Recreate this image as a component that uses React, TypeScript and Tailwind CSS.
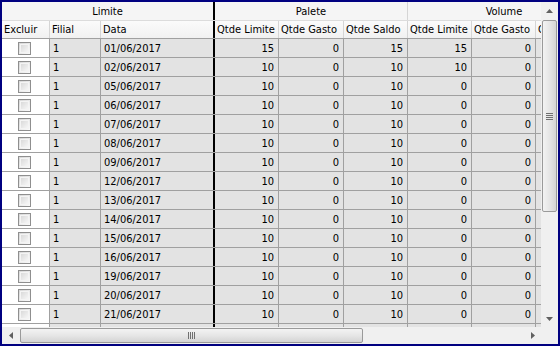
import React from "react";

const dates = [
  "01/06/2017","02/06/2017","05/06/2017","06/06/2017","07/06/2017","08/06/2017","09/06/2017",
  "12/06/2017","13/06/2017","14/06/2017","15/06/2017","16/06/2017","19/06/2017","20/06/2017","21/06/2017","22/06/2017",
];

type Row = { date: string; pl: number; pg: number; ps: number; vl: number; vg: number };
const rows: Row[] = dates.map((d, i) => ({
  date: d,
  pl: i === 0 ? 15 : 10,
  pg: 0,
  ps: i === 0 ? 15 : 10,
  vl: i === 0 ? 15 : i === 1 ? 10 : 0,
  vg: 0,
}));

const font = { fontFamily: '"DejaVu Sans Condensed", "Liberation Sans", sans-serif' };

function Checkbox() {
  return (
    <div className="w-[13px] h-[13px] border border-[#8f8f8f] bg-gradient-to-br from-[#d6d6d6] to-[#fbfbfb] p-px">
      <div className="w-full h-full border border-[#f4f4f4] bg-gradient-to-br from-[#dadada] to-[#f6f6f6]" />
    </div>
  );
}

function HeadCell({ w, label, thick }: { w: string; label: string; thick?: boolean }) {
  return (
    <div
      className={`${w} shrink-0 h-full flex items-center pl-[2px] whitespace-nowrap overflow-hidden ${
        thick ? "border-r-2 border-black" : "border-r border-[#d5d5d5]"
      }`}
    >
      {label}
    </div>
  );
}

function NumCell({ w, v }: { w: string; v: number }) {
  return (
    <div className={`${w} shrink-0 h-full flex items-center justify-end pr-[4px] border-r border-[#a0a0a0] bg-[#e3e3e3]`}>
      {v}
    </div>
  );
}

export default function App() {
  return (
    <div className="w-[560px] h-[346px] border-2 border-[#000080] bg-[#f0f0f0] flex flex-col text-[11px] text-black leading-none" style={font}>
      <div className="flex h-[325px]">
        {/* grid */}
        <div className="w-[539px] h-full overflow-hidden flex flex-col">
          {/* group header */}
          <div className="flex h-[19px] shrink-0 border-b border-[#dcdcdc] bg-[#f5f5f5]">
            <div className="w-[213px] shrink-0 h-full border-r-2 border-black flex items-center justify-center">Limite</div>
            <div className="w-[193px] shrink-0 h-full border-r border-[#d5d5d5] flex items-center justify-center">Palete</div>
            <div className="w-[192px] shrink-0 h-full flex items-center justify-center">Volume</div>
          </div>
          {/* column header */}
          <div className="flex h-[18px] shrink-0 border-b border-[#a0a0a0] bg-gradient-to-b from-[#fbfbfb] to-[#f1f1f1]">
            <HeadCell w="w-[48px]" label="Excluir" />
            <HeadCell w="w-[51px]" label="Filial" />
            <HeadCell w="w-[114px]" label="Data" thick />
            <HeadCell w="w-[64px]" label="Qtde Limite" />
            <HeadCell w="w-[65px]" label="Qtde Gasto" />
            <HeadCell w="w-[64px]" label="Qtde Saldo" />
            <HeadCell w="w-[64px]" label="Qtde Limite" />
            <HeadCell w="w-[64px]" label="Qtde Gasto" />
            <HeadCell w="w-[64px]" label="Qtde Saldo" />
          </div>
          {/* rows */}
          <div className="flex flex-col">
            {rows.map((r, i) => (
              <div key={i} className="flex h-[19px] shrink-0 border-b border-[#a0a0a0]">
                <div className="w-[48px] shrink-0 h-full bg-white border-r border-[#a0a0a0] flex items-center pl-[16px]">
                  <Checkbox />
                </div>
                <div className="w-[51px] shrink-0 h-full bg-[#e3e3e3] border-r border-[#a0a0a0] flex items-center pl-[3px]">1</div>
                <div className="w-[114px] shrink-0 h-full bg-[#e3e3e3] border-r-2 border-black flex items-center pl-[3px]">{r.date}</div>
                <NumCell w="w-[64px]" v={r.pl} />
                <NumCell w="w-[65px]" v={r.pg} />
                <NumCell w="w-[64px]" v={r.ps} />
                <NumCell w="w-[64px]" v={r.vl} />
                <NumCell w="w-[64px]" v={r.vg} />
                <NumCell w="w-[64px]" v={r.ps} />
              </div>
            ))}
          </div>
        </div>
        {/* vertical scrollbar */}
        <div className="w-[17px] h-full bg-[#f0f0f0] flex flex-col items-center">
          <div className="h-[17px] w-full flex items-center justify-center shrink-0">
            <svg width="7" height="4" viewBox="0 0 7 4"><path d="M0 4 L3.5 0 L7 4 Z" fill="#606060" /></svg>
          </div>
          <div className="w-[15px] h-[192px] mt-px rounded-[2px] border border-[#9a9a9a] bg-gradient-to-r from-[#f3f3f3] via-[#e6e6e6] to-[#d4d4d4] flex flex-col items-center justify-center gap-px shrink-0">
            <div className="w-[7px] h-px bg-[#707070]" />
            <div className="w-[7px] h-px bg-[#707070]" />
            <div className="w-[7px] h-px bg-[#707070]" />
            <div className="w-[7px] h-px bg-[#707070]" />
          </div>
          <div className="flex-1" />
          <div className="h-[17px] w-full flex items-center justify-center shrink-0">
            <svg width="7" height="4" viewBox="0 0 7 4"><path d="M0 0 L7 0 L3.5 4 Z" fill="#606060" /></svg>
          </div>
        </div>
      </div>
      {/* horizontal scrollbar */}
      <div className="flex h-[17px] shrink-0">
        <div className="w-[539px] h-full bg-[#f0f0f0] flex items-center">
          <div className="w-[17px] h-full flex items-center justify-center shrink-0">
            <svg width="4" height="7" viewBox="0 0 4 7"><path d="M4 0 L4 7 L0 3.5 Z" fill="#606060" /></svg>
          </div>
          <div className="ml-px w-[343px] h-[15px] rounded-[2px] border border-[#9a9a9a] bg-gradient-to-b from-[#f3f3f3] via-[#e6e6e6] to-[#d4d4d4] flex items-center justify-center gap-px shrink-0">
            <div className="w-px h-[7px] bg-[#707070]" />
            <div className="w-px h-[7px] bg-[#707070]" />
            <div className="w-px h-[7px] bg-[#707070]" />
            <div className="w-px h-[7px] bg-[#707070]" />
          </div>
          <div className="flex-1" />
          <div className="w-[17px] h-full flex items-center justify-center shrink-0">
            <svg width="4" height="7" viewBox="0 0 4 7"><path d="M0 0 L4 3.5 L0 7 Z" fill="#606060" /></svg>
          </div>
        </div>
        <div className="w-[17px] h-full bg-[#f0f0f0]" />
      </div>
    </div>
  );
}
